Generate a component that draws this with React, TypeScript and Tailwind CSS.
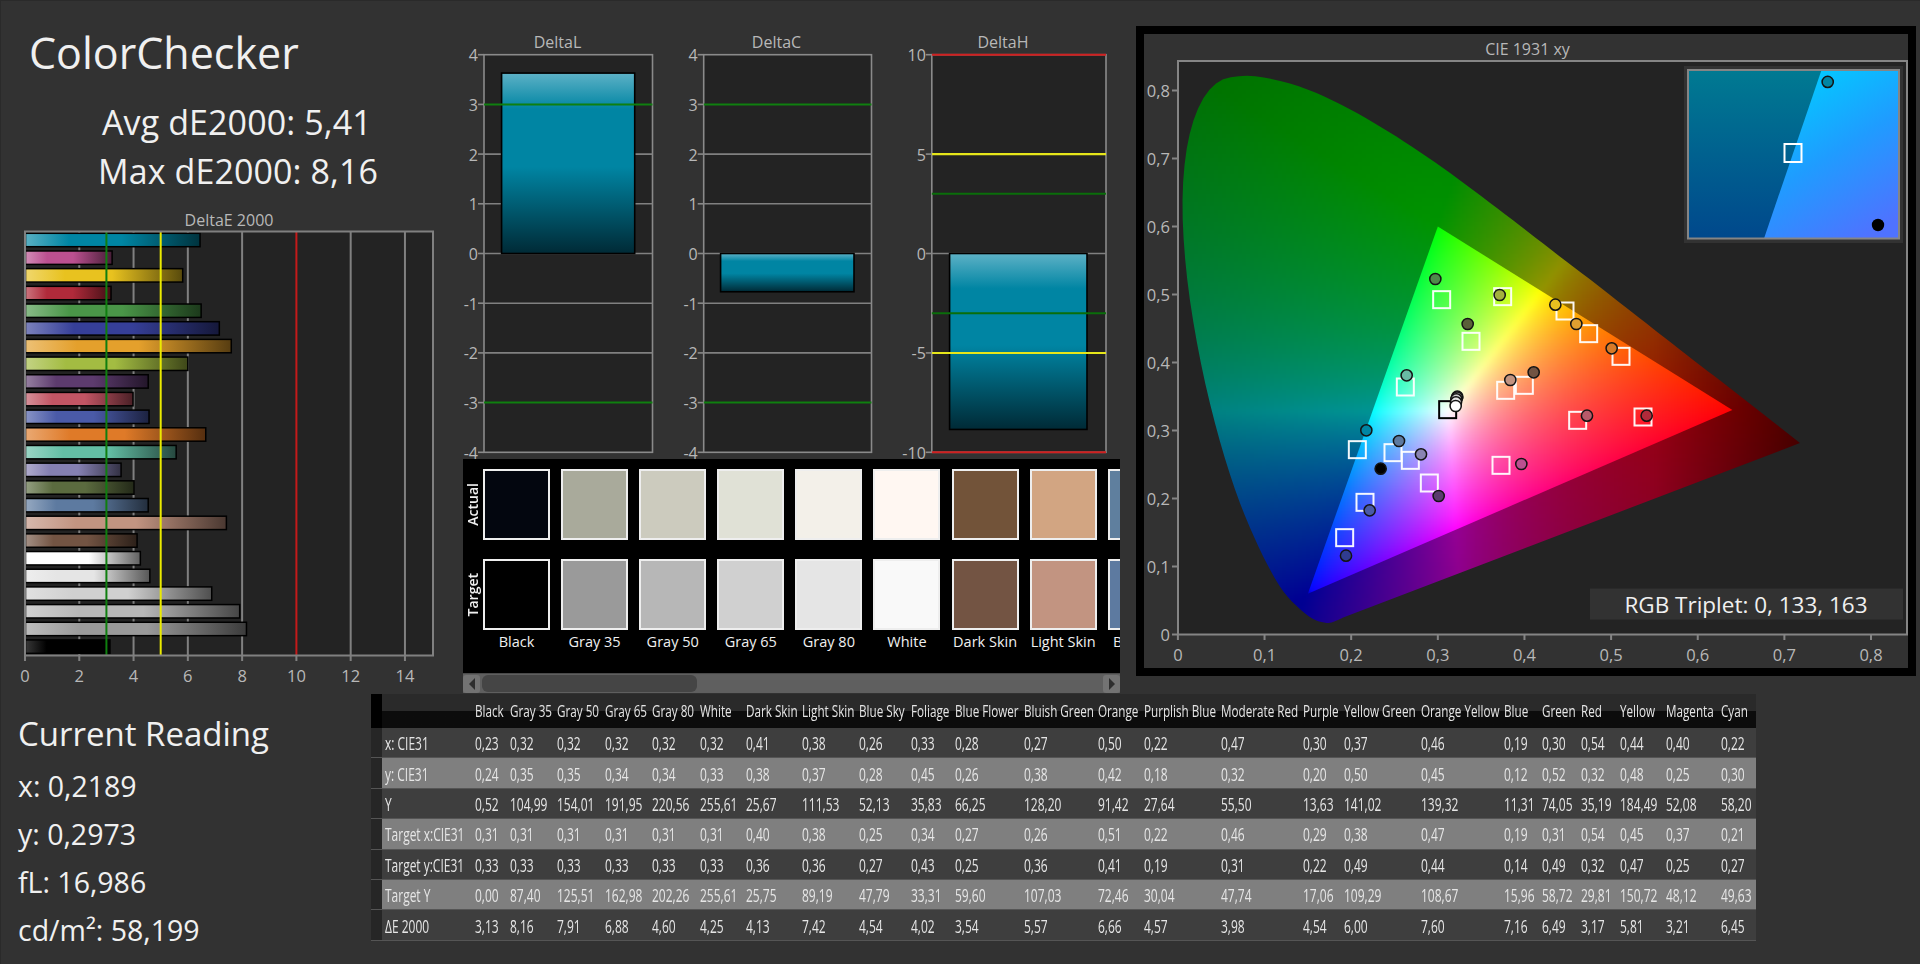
import React, { useMemo } from "react";

// sRGB triangle and the spectral locus, in CIE xy
const TRI: [number, number][] = [[0.64, 0.33], [0.3, 0.6], [0.15, 0.06]];
const CURVE: [number, number][] = [
  [0.19, 0.0245], [0.178, 0.0175], [0.171, 0.0165], [0.1566, 0.0215], [0.144, 0.0335], [0.1241, 0.0578], [0.1096, 0.0868],
  [0.0913, 0.1327], [0.0687, 0.2007], [0.0454, 0.295], [0.0235, 0.4127], [0.0082, 0.5384], [0.0039, 0.6548], [0.0139, 0.7502],
  [0.0389, 0.812], [0.0743, 0.8238], [0.1142, 0.8162], [0.1547, 0.8], [0.1929, 0.7766], [0.2296, 0.7503],
  [0.2658, 0.7213], [0.3016, 0.6903], [0.3373, 0.6569], [0.3731, 0.6225], [0.4087, 0.5876], [0.4441, 0.5527],
  [0.4788, 0.5192], [0.5125, 0.4856], [0.5448, 0.4534], [0.5752, 0.4232], [0.6029, 0.3955], [0.627, 0.3725],
];

function chaikin(pts: [number, number][]) {
  const out: [number, number][] = [pts[0]];
  for (let i = 0; i < pts.length - 1; i++) {
    const [ax, ay] = pts[i];
    const [bx, by] = pts[i + 1];
    out.push([0.75 * ax + 0.25 * bx, 0.75 * ay + 0.25 * by], [0.25 * ax + 0.75 * bx, 0.25 * ay + 0.75 * by]);
  }
  out.push(pts[pts.length - 1]);
  return out;
}

const LOCUS: [number, number][] = [...chaikin(chaikin(CURVE)), [0.718, 0.2816]];

const px = (x: number) => 1177.9 + 866.4 * x;
const py = (y: number) => 634.5 - 680 * y;
const toPts = (l: [number, number][]) => l.map(([x, y]) => `${px(x)},${py(y)}`).join(" ");

function inPoly(x: number, y: number, poly: [number, number][]) {
  let c = false;
  for (let i = 0, j = poly.length - 1; i < poly.length; j = i++) {
    const [xi, yi] = poly[i];
    const [xj, yj] = poly[j];
    if (yi > y !== yj > y && x < ((xj - xi) * (y - yi)) / (yj - yi) + xi) c = !c;
  }
  return c;
}

function segDist(x: number, y: number, a: [number, number], b: [number, number]) {
  const dx = b[0] - a[0];
  const dy = b[1] - a[1];
  const t = Math.max(0, Math.min(1, ((x - a[0]) * dx + (y - a[1]) * dy) / (dx * dx + dy * dy)));
  return Math.hypot(x - a[0] - t * dx, y - a[1] - t * dy);
}

function xyColor(x: number, y: number, gamma: number, gain: number) {
  const yy = Math.max(y, 0.01);
  const X = x / yy;
  const Z = (1 - x - yy) / yy;
  const r = Math.max(0, 3.2406 * X - 1.5372 - 0.4986 * Z);
  const g = Math.max(0, -0.9689 * X + 1.8758 + 0.0415 * Z);
  const b = Math.max(0, 0.0557 * X - 0.204 + 1.057 * Z);
  const m = Math.max(r, g, b, 0.0001);
  const f = (v: number) => Math.round(255 * gain * Math.pow(v / m, 1 / gamma));
  return `rgb(${f(r)},${f(g)},${f(b)})`;
}

type Cell = { x: number; y: number; c: string };

function buildCells(step: number, inner: boolean) {
  const cells: Cell[] = [];
  const poly = inner ? TRI : LOCUS;
  for (let sx = 1170; sx < 1810; sx += step) {
    for (let sy = 70; sy < 630; sy += step) {
      const x = (sx + step / 2 - 1177.9) / 866.4;
      const y = (634.5 - sy - step / 2) / 680;
      const m = 0.012;
      const near = [[0, 0], [m, 0], [-m, 0], [0, m], [0, -m]].some(([a, b]) => inPoly(x + a, y + b, poly));
      if (!near) continue;
      if (inner) {
        cells.push({ x: sx, y: sy, c: xyColor(x, y, 1.25, 1) });
      } else {
        const d = Math.min(segDist(x, y, TRI[0], TRI[1]), segDist(x, y, TRI[1], TRI[2]), segDist(x, y, TRI[2], TRI[0]));
        let gain = 0.58 - 0.4 * d;
        if (x > 0.55) gain -= (x - 0.55) * 1.6;
        cells.push({ x: sx, y: sy, c: xyColor(x, y, 1.15, Math.max(gain, 0.2)) });
      }
    }
  }
  return cells;
}

const CIRCLES: [number, number, string][] = [
  [586, 117, "#4f8a4a"], [779, 165, "#a3b03e"], [683, 252, "#5a6039"], [946, 194, "#e8c020"], [1009, 252, "#dfa030"],
  [1115, 325, "#d87a28"], [500, 406, "#68bba5"], [881, 397, "#725342"], [811, 420, "#c29481"], [652, 470, "#9a9a9a"],
  [651, 473, "#b7b7b7"], [649, 478, "#d0d0d0"], [648, 487, "#e5e5e5"], [647, 498, "#ffffff"], [1041, 527, "#b85a6a"],
  [1220, 527, "#b02a3a"], [379, 571, "#0085a3"], [477, 603, "#5d7aa0"], [543, 643, "#8a84b2"], [422, 686, "#000000"],
  [844, 672, "#bb5090"], [596, 768, "#5b3b6e"], [389, 811, "#4a5aa8"], [318, 947, "#303c90"],
];
const SQUARES: [number, number][] = [
  [605, 179], [788, 170], [693, 304], [975, 213], [1046, 281], [1143, 349], [496, 441], [853, 436], [797, 451],
  [1013, 541], [1209, 531], [352, 629], [459, 638], [511, 661], [568, 729], [783, 676], [375, 787], [314, 893],
];

function GamutChart() {
  const outer = useMemo(() => buildCells(4, false), []);
  const inner = useMemo(() => buildCells(3, true), []);
  const xTicks = [0, 1, 2, 3, 4, 5, 6, 7, 8];
  return (
    <svg viewBox="1144 34 767 634" width={767} height={634} className="block" fill="#b8b8b8">
      <defs>
        <clipPath id="locus"><polygon points={toPts(LOCUS)} /></clipPath>
        <clipPath id="tri"><polygon points={toPts(TRI)} /></clipPath>
        <filter id="soft" colorInterpolationFilters="sRGB" x="-5%" y="-5%" width="110%" height="110%">
          <feGaussianBlur stdDeviation="2" />
        </filter>
        <linearGradient id="insetL" x1="0" y1="0" x2="0" y2="1">
          <stop offset="0" stopColor="#007a92" />
          <stop offset="1" stopColor="#00488c" />
        </linearGradient>
        <linearGradient id="insetR" x1="0.25" y1="0" x2="0.75" y2="1">
          <stop offset="0" stopColor="#00ceff" />
          <stop offset="0.5" stopColor="#1f9cff" />
          <stop offset="1" stopColor="#4f72ff" />
        </linearGradient>
      </defs>
      <text x={1527.5} y={54.5} textAnchor="middle" fontSize={16}>CIE 1931 xy</text>
      <rect x={1178} y={61} width={729} height={573.5} fill="#232323" stroke="#858585" strokeWidth={2} />
      <g clipPath="url(#locus)">
        <g filter="url(#soft)" shapeRendering="crispEdges">
          {outer.map((c, i) => <rect key={i} x={c.x} y={c.y} width={4.5} height={4.5} fill={c.c} />)}
        </g>
      </g>
      <g clipPath="url(#tri)">
        <g filter="url(#soft)" shapeRendering="crispEdges">
          {inner.map((c, i) => <rect key={i} x={c.x} y={c.y} width={3.5} height={3.5} fill={c.c} />)}
        </g>
      </g>
      {/* axes */}
      {xTicks.map((t) => (
        <g key={t}>
          <line x1={px(t / 10)} x2={px(t / 10)} y1={634.5} y2={640} stroke="#858585" strokeWidth={2} />
          <text x={px(t / 10)} y={660.5} textAnchor="middle" fontSize={16.5}>{t === 0 ? "0" : `0,${t}`}</text>
          <line x1={1172} x2={1178} y1={py(t / 10)} y2={py(t / 10)} stroke="#858585" strokeWidth={2} />
          <text x={1170} y={py(t / 10) + 6} textAnchor="end" fontSize={16.5}>{t === 0 ? "0" : `0,${t}`}</text>
        </g>
      ))}
      {/* measured and target points */}
      {SQUARES.map(([x, y], i) => (
        <rect key={i} x={1240 + x / 3 - 8.5} y={240 + y / 3 - 8.5} width={17} height={17} fill="none" stroke="#fff" strokeWidth={2} opacity={0.95} />
      ))}
      <rect x={1240 + 623 / 3 - 8.5} y={240 + 509 / 3 - 8.5} width={17} height={17} fill="none" stroke="#000" strokeWidth={2} />
      {CIRCLES.map(([x, y, c], i) => (
        <circle key={i} cx={1240 + x / 3} cy={240 + y / 3} r={5.6} fill={c} stroke="#141414" strokeWidth={1.5} />
      ))}
      {/* zoomed inset */}
      <rect x={1684} y={66} width={219} height={177} fill="#323232" />
      <rect x={1688} y={70} width={211} height={168.5} fill="url(#insetL)" />
      <polygon points="1821.5,70 1899,70 1899,238.5 1764,238.5" fill="url(#insetR)" />
      <rect x={1688} y={70} width={211} height={168.5} fill="none" stroke="#858585" strokeWidth={2} />
      <rect x={1784.5} y={144} width={17} height={18} fill="none" stroke="#fff" strokeWidth={2} />
      <circle cx={1827.7} cy={81.9} r={5.6} fill="#0085a3" stroke="#141414" strokeWidth={1.5} />
      <circle cx={1878} cy={225} r={6.2} fill="#000" />
      {/* triplet readout */}
      <rect x={1590} y={588.6} width={313} height={31} fill="#323232" />
      <text x={1746} y={612.5} textAnchor="middle" fontSize={22.5} fill="#f0f0f0">RGB Triplet: 0, 133, 163</text>
    </svg>
  );
}

const BARS: [number, string][] = [
  [6.45, "#0085a3"], [3.21, "#bb5090"], [5.81, "#e8c21f"], [3.17, "#b02a3a"], [6.49, "#4a9648"], [7.16, "#363f98"],
  [7.6, "#e4a02c"], [6.0, "#a3bc42"], [4.54, "#5d3b6e"], [3.98, "#c25564"], [4.57, "#4a5aa8"], [6.66, "#df7a28"],
  [5.57, "#63bea5"], [3.54, "#8580b2"], [4.02, "#5b6b3f"], [4.54, "#5d7aa0"], [7.42, "#c29481"], [4.13, "#735443"],
  [4.25, "#ffffff"], [4.6, "#e5e5e5"], [6.88, "#d0d0d0"], [7.91, "#b7b7b7"], [8.16, "#9a9a9a"], [3.13, "#000000"],
];

function mix(hex: string, to: number, t: number) {
  const n = parseInt(hex.slice(1), 16);
  const ch = [(n >> 16) & 255, (n >> 8) & 255, n & 255].map((v) => Math.round(v + (to - v) * t));
  return `rgb(${ch[0]},${ch[1]},${ch[2]})`;
}

function DeltaEChart() {
  const ex = (v: number) => 25 + 27.14 * v;
  return (
    <svg viewBox="0 210 463 484" width={463} height={484} className="block" fill="#b8b8b8">
      <defs>
        {BARS.map(([, c], i) => (
          <linearGradient key={i} id={`bar${i}`} x1="0" x2="1" y1="0" y2="0">
            <stop offset="0" stopColor={mix(c, 255, c === "#000000" ? 0.22 : 0.35)} />
            <stop offset="0.25" stopColor={c} />
            <stop offset="0.55" stopColor={c} />
            <stop offset="1" stopColor={mix(c, 0, 0.62)} />
          </linearGradient>
        ))}
      </defs>
      <text x={229} y={225.5} textAnchor="middle" fontSize={16}>DeltaE 2000</text>
      <rect x={25} y={231.5} width={408} height={424} fill="#232323" />
      {[2, 4, 6, 8, 12, 14].map((v) => (
        <line key={v} x1={ex(v)} x2={ex(v)} y1={231} y2={656} stroke="#808080" strokeWidth={2} />
      ))}
      {BARS.map(([v], i) => (
        <rect key={i} x={25.5} y={240 + i * 17.68 - 6.7} width={ex(v) - 25.5} height={13.4} fill={`url(#bar${i})`} stroke="#000" strokeWidth={1.5} />
      ))}
      <line x1={ex(3)} x2={ex(3)} y1={231} y2={656} stroke="#0f7f0f" strokeWidth={2} />
      <line x1={ex(5)} x2={ex(5)} y1={231} y2={656} stroke="#eaea00" strokeWidth={2} />
      <line x1={ex(10)} x2={ex(10)} y1={231} y2={656} stroke="#c41a1a" strokeWidth={2} />
      <rect x={25} y={231.5} width={408} height={424} fill="none" stroke="#808080" strokeWidth={2} />
      {[0, 2, 4, 6, 8, 10, 12, 14].map((v) => (
        <g key={v}>
          <line x1={ex(v)} x2={ex(v)} y1={656} y2={661} stroke="#808080" strokeWidth={2} />
          <text x={ex(v)} y={681.5} textAnchor="middle" fontSize={16.5}>{v}</text>
        </g>
      ))}
    </svg>
  );
}

type DeltaProps = {
  view: [number, number];
  title: string;
  titleX: number;
  x0: number;
  x1: number;
  max: number;
  ticks: number[];
  grid: number[];
  lines: [number, string, number][];
  bar: [number, number, number, number];
  id: string;
};

const TOP = 54.7;
const BOTTOM = 452.3;

function DeltaChart({ view, title, titleX, x0, x1, max, ticks, grid, lines, bar, id }: DeltaProps) {
  const vy = (v: number) => TOP + ((max - v) / (2 * max)) * (BOTTOM - TOP);
  const [bx0, bx1, vTop, vBottom] = bar;
  return (
    <svg viewBox={`${view[0]} 0 ${view[1]} 459`} width={view[1]} height={459} className="block shrink-0 overflow-visible" fill="#b8b8b8">
      <defs>
        <linearGradient id={id} x1="0" x2="0" y1="0" y2="1">
          <stop offset="0" stopColor="#5db1c6" />
          <stop offset="0.2" stopColor="#0085a3" />
          <stop offset="0.52" stopColor="#0085a3" />
          <stop offset="1" stopColor="#002a36" />
        </linearGradient>
      </defs>
      <text x={titleX} y={48} textAnchor="middle" fontSize={16}>{title}</text>
      <rect x={x0} y={TOP} width={x1 - x0} height={BOTTOM - TOP} fill="#232323" stroke="#8a8a8a" strokeWidth={1.6} />
      {grid.map((v) => (
        <line key={v} x1={x0} x2={x1} y1={vy(v)} y2={vy(v)} stroke="#808080" strokeWidth={1.6} />
      ))}
      <rect x={bx0} y={vy(vTop)} width={bx1 - bx0} height={vy(vBottom) - vy(vTop)} fill={`url(#${id})`} stroke="#000" strokeWidth={1.6} />
      {lines.map(([v, c, w], i) => (
        <line key={i} x1={x0} x2={x1} y1={vy(v)} y2={vy(v)} stroke={c} strokeWidth={w} />
      ))}
      {ticks.map((v) => (
        <g key={v}>
          <line x1={x0 - 6} x2={x0} y1={vy(v)} y2={vy(v)} stroke="#8a8a8a" strokeWidth={1.6} />
          <text x={x0 - 6} y={vy(v) + 6.5} textAnchor="end" fontSize={16}>{v}</text>
        </g>
      ))}
    </svg>
  );
}

const SWATCHES: [string, string, string][] = [
  ["Black", "#03060f", "#000000"],
  ["Gray 35", "#a9aa9b", "#9a9a9a"],
  ["Gray 50", "#cccbbe", "#b7b7b7"],
  ["Gray 65", "#e0e1d6", "#d0d0d0"],
  ["Gray 80", "#f3f0e9", "#e5e5e5"],
  ["White", "#fff7f2", "#f9f9f9"],
  ["Dark Skin", "#725339", "#735443"],
  ["Light Skin", "#d2a582", "#c29481"],
  ["Blue Sky", "#5f7f9e", "#5d7aa0"],
];

function SwatchRow({ label, idx }: { label: string; idx: 1 | 2 }) {
  return (
    <div className="flex h-[71px]">
      <div className="flex w-[20px] shrink-0 items-center justify-center">
        <span className="rotate-180 text-sm font-semibold text-[#f0f0f0] [writing-mode:vertical-rl]">{label}</span>
      </div>
      <div className="flex gap-[11.1px]">
        {SWATCHES.map((s) => (
          <div key={s[0]} className="h-[71px] w-[67px] shrink-0 border-2 border-[#eeeeee]" style={{ background: s[idx] }} />
        ))}
      </div>
    </div>
  );
}

function SwatchPanel() {
  return (
    <div className="flex h-[234px] w-[657px] flex-col overflow-hidden">
      <div className="flex h-[214px] flex-col bg-black pt-[10px]">
        <SwatchRow label="Actual" idx={1} />
        <div className="mt-[19px]">
          <SwatchRow label="Target" idx={2} />
        </div>
        <div className="ml-[20px] mt-[2px] flex gap-[11.1px]">
          {SWATCHES.map((s) => (
            <div key={s[0]} className="w-[67px] shrink-0 whitespace-nowrap text-center text-[14.5px] leading-[20px] text-[#f0f0f0]">
              {s[0]}
            </div>
          ))}
        </div>
      </div>
      <div className="flex h-[20px] items-center gap-[2px] border-t border-[#4a4a4a] bg-[#5f5f5f]">
        <div className="flex h-[18px] w-[17px] items-center justify-center rounded-[3px] bg-[#737373]">
          <div className="h-0 w-0 border-y-[6px] border-r-[6px] border-y-transparent border-r-[#2e2e2e]" />
        </div>
        <div className="h-[17px] w-[215px] rounded-[6px] bg-[#454545]" />
        <div className="flex-1" />
        <div className="flex h-[18px] w-[17px] items-center justify-center rounded-[3px] bg-[#737373]">
          <div className="h-0 w-0 border-y-[6px] border-l-[6px] border-y-transparent border-l-[#2e2e2e]" />
        </div>
      </div>
    </div>
  );
}

const HEAD = ["", "Black", "Gray 35", "Gray 50", "Gray 65", "Gray 80", "White", "Dark Skin", "Light Skin", "Blue Sky", "Foliage", "Blue Flower", "Bluish Green", "Orange", "Purplish Blue", "Moderate Red", "Purple", "Yellow Green", "Orange Yellow", "Blue", "Green", "Red", "Yellow", "Magenta", "Cyan"];
const ROWS = [
  "x: CIE31|0,23|0,32|0,32|0,32|0,32|0,32|0,41|0,38|0,26|0,33|0,28|0,27|0,50|0,22|0,47|0,30|0,37|0,46|0,19|0,30|0,54|0,44|0,40|0,22",
  "y: CIE31|0,24|0,35|0,35|0,34|0,34|0,33|0,38|0,37|0,28|0,45|0,26|0,38|0,42|0,18|0,32|0,20|0,50|0,45|0,12|0,52|0,32|0,48|0,25|0,30",
  "Y|0,52|104,99|154,01|191,95|220,56|255,61|25,67|111,53|52,13|35,83|66,25|128,20|91,42|27,64|55,50|13,63|141,02|139,32|11,31|74,05|35,19|184,49|52,08|58,20",
  "Target x:CIE31|0,31|0,31|0,31|0,31|0,31|0,31|0,40|0,38|0,25|0,34|0,27|0,26|0,51|0,22|0,46|0,29|0,38|0,47|0,19|0,31|0,54|0,45|0,37|0,21",
  "Target y:CIE31|0,33|0,33|0,33|0,33|0,33|0,33|0,36|0,36|0,27|0,43|0,25|0,36|0,41|0,19|0,31|0,22|0,49|0,44|0,14|0,49|0,32|0,47|0,25|0,27",
  "Target Y|0,00|87,40|125,51|162,98|202,26|255,61|25,75|89,19|47,79|33,31|59,60|107,03|72,46|30,04|47,74|17,06|109,29|108,67|15,96|58,72|29,81|150,72|48,12|49,63",
  "ΔE 2000|3,13|8,16|7,91|6,88|4,60|4,25|4,13|7,42|4,54|4,02|3,54|5,57|6,66|4,57|3,98|4,54|6,00|7,60|7,16|6,49|3,17|5,81|3,21|6,45",
].map((r) => r.split("|"));

const COLS = "grid grid-cols-[11.2px_89.9px_34.7px_47.5px_47.5px_47.3px_47.5px_46.4px_55.6px_57.7px_51.5px_44px_69.3px_74px_45.7px_77px_82.7px_40.8px_76.5px_83px_38.5px_39.2px_38.8px_45.9px_54.6px_38px]";

function Cell({ text, head }: { text: string; head?: boolean }) {
  return head ? (
    <div className="flex items-center pl-[3px]">
      <span className="inline-block origin-left scale-x-[0.73] whitespace-nowrap text-[16px] text-[#e6e6e6]">{text}</span>
    </div>
  ) : (
    <div className="flex items-center pl-[3px] pt-[2px]">
      <span className="inline-block origin-left scale-x-[0.665] whitespace-nowrap text-[18px] text-[#e6e6e6]">{text}</span>
    </div>
  );
}

function DataTable() {
  return (
    <div className="w-[1385px]">
      <div className={`${COLS} h-[34px] bg-gradient-to-b from-[#2a2a2a] from-50% to-[#0c0c0c] to-50%`}>
        <div className="bg-black" />
        {HEAD.map((h, i) => <Cell key={i} text={h} head />)}
      </div>
      {ROWS.map((r, i) => (
        <div key={i} className={`${COLS} h-[30.4px] border-b border-[#555555] ${i % 2 ? "bg-[#7f7f7f]" : "bg-[#3e3e3e]"}`}>
          <div className="bg-[#262626]" />
          {r.map((c, j) => <Cell key={j} text={c} />)}
        </div>
      ))}
    </div>
  );
}

export default function App() {
  return (
    <div className="flex h-screen w-screen flex-col overflow-hidden bg-[#323232] font-['Open_Sans',sans-serif] text-[#f0f0f0] shadow-[inset_1px_1px_0_#2a2a2a]">
      <div className="flex h-[694px] shrink-0">
        {/* summary and DeltaE bars */}
        <div className="w-[463px] shrink-0">
          <div className="h-[210px] pt-[28px]">
            <div className="pl-[29px] text-[43px] leading-[50px]">ColorChecker</div>
            <div className="mt-[20px] pl-[102px] text-[34px] leading-[49px] tracking-[0.1px]">Avg dE2000: 5,41</div>
            <div className="pl-[98px] text-[34px] leading-[49px] tracking-[0.1px]">Max dE2000: 8,16</div>
          </div>
          <DeltaEChart />
        </div>

        {/* delta charts and swatches */}
        <div className="w-[657px] shrink-0">
          <div className="flex h-[459px]">
            <DeltaChart
              id="gl" view={[463, 215]} title="DeltaL" titleX={557.5} x0={484} x1={652.5} max={4}
              ticks={[4, 3, 2, 1, 0, -1, -2, -3, -4]} grid={[2, 1, 0, -1, -2]}
              lines={[[3, "#0f7f0f", 2], [-3, "#0f7f0f", 2]]} bar={[501.6, 634.7, 3.63, 0]}
            />
            <DeltaChart
              id="gc" view={[678, 235]} title="DeltaC" titleX={776.5} x0={703.7} x1={871.5} max={4}
              ticks={[4, 3, 2, 1, 0, -1, -2, -3, -4]} grid={[2, 1, 0, -1, -2]}
              lines={[[3, "#0f7f0f", 2], [-3, "#0f7f0f", 2]]} bar={[720.6, 854, 0, -0.77]}
            />
            <DeltaChart
              id="gh" view={[913, 207]} title="DeltaH" titleX={1003} x0={931.8} x1={1106} max={10}
              ticks={[10, 5, 0, -5, -10]} grid={[0]}
              lines={[[10, "#d02020", 2], [-10, "#d02020", 2], [5, "#e6e61a", 2.4], [-5, "#e6e61a", 2], [3, "#0a6e0a", 2], [-3, "#0a6e0a", 2]]}
              bar={[949.6, 1087, 0, -8.85]}
            />
          </div>
          <SwatchPanel />
        </div>

        {/* gamut panel */}
        <div className="ml-[16px] mt-[26px] h-[650px] w-[780px] shrink-0 border-8 border-black bg-[#323232]">
          <GamutChart />
        </div>
      </div>

      <div className="flex">
        <div className="w-[371px] shrink-0 pl-[18px] pt-[14px]">
          <div className="mb-[2px] text-[33px] leading-[52px]">Current Reading</div>
          <div className="text-[28.5px] leading-[48px]">x: 0,2189</div>
          <div className="text-[28.5px] leading-[48px]">y: 0,2973</div>
          <div className="text-[28.5px] leading-[48px]">fL: 16,986</div>
          <div className="text-[28.5px] leading-[48px]">cd/m²: 58,199</div>
        </div>
        <DataTable />
      </div>
    </div>
  );
}
